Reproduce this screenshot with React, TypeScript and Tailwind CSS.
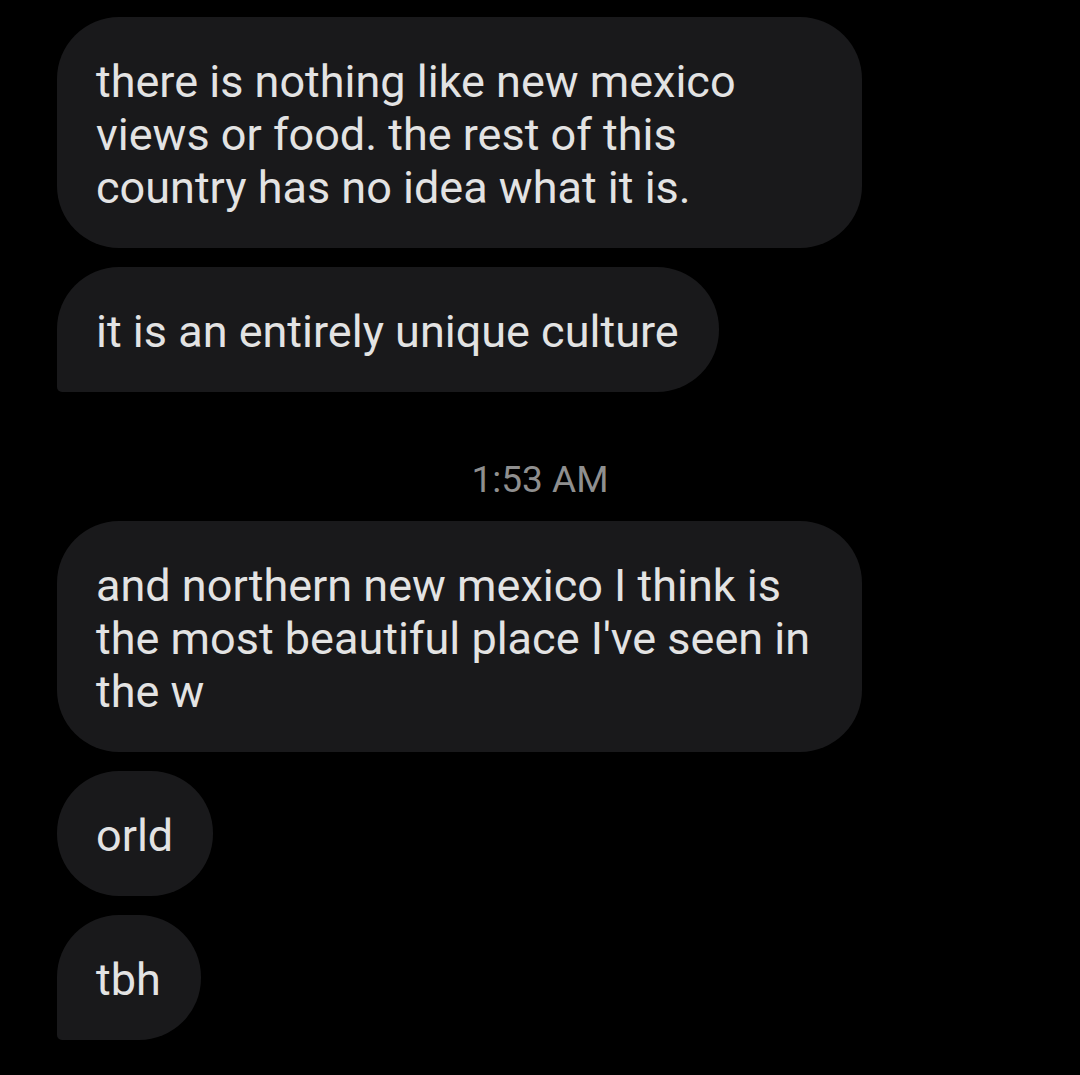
const font = { fontFamily: "Roboto, 'Noto Sans', sans-serif" };

type Msg = { lines: string[]; wide?: boolean; tail?: boolean };

function Bubble({ lines, wide, tail }: Msg) {
  return (
    <div
      className={
        "bg-[#19191b] text-[#e3e3e3] text-[45px] leading-[53px] pl-[39px] pr-[40px] pt-[38px] pb-[34px] rounded-[62px] " +
        (wide ? "w-[805px] " : "w-fit ") +
        (tail ? "rounded-bl-[5px]" : "")
      }
    >
      {lines.map((l, i) => (
        <div key={i} className="whitespace-nowrap">
          {l}
        </div>
      ))}
    </div>
  );
}

export default function App() {
  return (
    <div className="w-[1080px] h-[1075px] bg-black overflow-hidden" style={font}>
      <div className="pl-[57px] pt-[17px] flex flex-col gap-[19px]">
        <Bubble
          wide
          lines={[
            "there is nothing like new mexico",
            "views or food. the rest of this",
            "country has no idea what it is.",
          ]}
        />
        <Bubble tail lines={["it is an entirely unique culture"]} />
      </div>
      <div className="h-[129px] pt-[46px] flex items-center justify-center text-[#8f8f8f] text-[37px]">
        1:53 AM
      </div>
      <div className="pl-[57px] flex flex-col gap-[19px]">
        <Bubble
          wide
          lines={[
            "and northern new mexico I think is",
            "the most beautiful place I've seen in",
            "the w",
          ]}
        />
        <Bubble lines={["orld"]} />
        <Bubble tail lines={["tbh"]} />
      </div>
    </div>
  );
}
